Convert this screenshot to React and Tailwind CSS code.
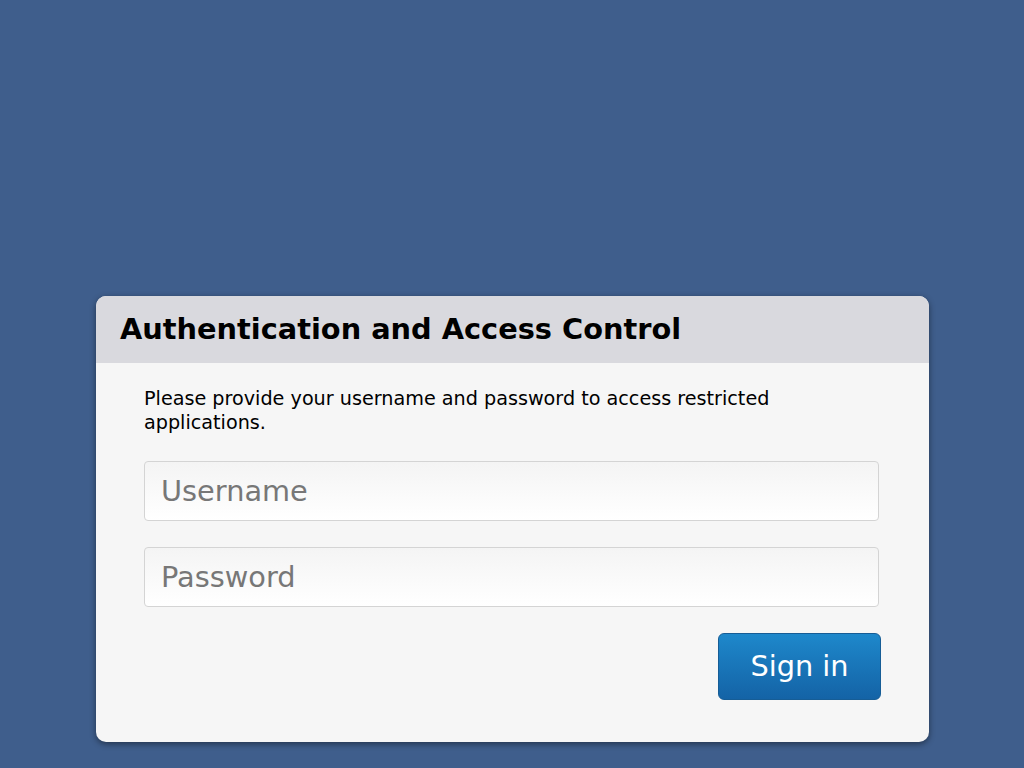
export default function App() {
  return (
    <div
      className="min-h-screen w-full bg-[#3f5e8c] pt-[296px] pl-[96px] pr-[95px]"
      style={{ fontFamily: '"DejaVu Sans", sans-serif' }}
    >
      <div className="w-[833px] h-[446px] rounded-[10px] bg-[#f6f6f6] overflow-hidden shadow-[0_2px_6px_rgba(0,0,0,0.45)]">
        <div className="h-[67px] bg-[#d9d9de] pl-[24px] flex items-center">
          <h1 className="text-[28.8px] font-bold text-black leading-none">Authentication and Access Control</h1>
        </div>
        <div className="pl-[48px] pr-[50px] pt-[24px]">
          <p className="text-[19.2px] leading-[24px] text-black pr-[40px]">
            Please provide your username and password to access restricted applications.
          </p>
          <input
            type="text"
            placeholder="Username"
            className="mt-[26px] block w-[735px] h-[60px] rounded-[4px] border border-[#d4d4d4] bg-gradient-to-b from-[#f4f4f4] to-white px-[16px] text-[28.8px] text-[#555] placeholder:text-[#777] outline-none"
          />
          <input
            type="password"
            placeholder="Password"
            className="mt-[26px] block w-[735px] h-[60px] rounded-[4px] border border-[#d4d4d4] bg-gradient-to-b from-[#f4f4f4] to-white px-[16px] text-[28.8px] text-[#555] placeholder:text-[#777] outline-none"
          />
          <div className="flex justify-end mt-[26px] w-[737px]">
            <button className="w-[163px] h-[67px] rounded-[6px] bg-gradient-to-b from-[#1e88cb] to-[#1463a6] border border-[#165d96] text-white text-[28.8px] leading-none">
              Sign in
            </button>
          </div>
        </div>
      </div>
    </div>
  );
}
